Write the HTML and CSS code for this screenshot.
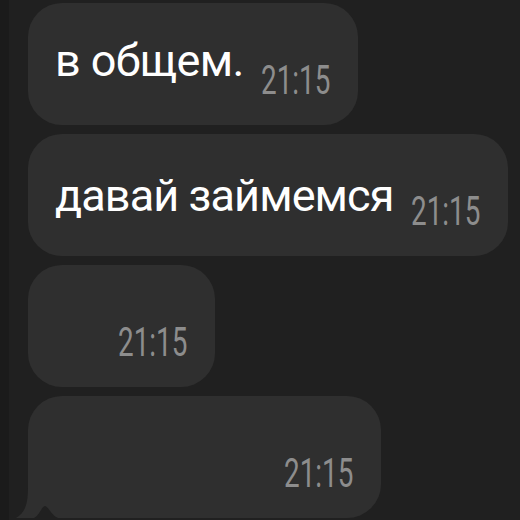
FILE: index.html
```html
<!DOCTYPE html>
<html lang="ru">
<head>
  <meta charset="UTF-8">
  <meta name="viewport" content="width=device-width, initial-scale=1.0">
  <title>Чат</title>
  <link rel="stylesheet" href="styles.css">
</head>
<body>
  <div class="chat">
    <div class="bubble">
      <span class="text">в общем.</span>
      <span class="time">21:15</span>
    </div>
    <div class="bubble bubble-low">
      <span class="text">давай займемся</span>
      <span class="time">21:15</span>
    </div>
    <div class="bubble bubble-empty">
      <span class="time">21:15</span>
    </div>
    <div class="bubble bubble-empty bubble-last">
      <span class="time">21:15</span>
      <svg class="tail" width="50" height="30" viewBox="0 0 50 30">
        <path d="M13 0 C13 16 10 25 1 30 L13 30 Z" fill="#2f2f2f"/>
        <path d="M19 30 C25 27 26 19 30 18 C34 19 36 27 43 30 Z" fill="#202020"/>
      </svg>
    </div>
  </div>
</body>
</html>
```

FILE: styles.css
```css
/* chat screenshot */
body {
  margin: 0;
  background: #202020;
  font-family: Roboto, "Liberation Sans", sans-serif;
  border-left: 9px solid #1b1b1b;
  min-height: 520px;
  box-sizing: border-box;
}

.chat {
  display: flex;
  flex-direction: column;
  align-items: flex-start;
  gap: 9px;
  padding: 3px 0 0 19px;
}

.bubble {
  position: relative;
  display: flex;
  align-items: flex-end;
  gap: 17px;
  height: 122px;
  box-sizing: border-box;
  padding: 0 30px 24px 27px;
  background: #2f2f2f;
  border-radius: 34px;
}

.text {
  color: #fff;
  font-size: 45px;
  line-height: 1;
  letter-spacing: -0.6px;
  white-space: nowrap;
  margin-bottom: 18px;
}

.bubble-low .text {
  letter-spacing: -0.9px;
  margin-bottom: 14px;
}

.time {
  display: inline-block;
  width: 67px;
  color: #8d8d8d;
  font-size: 41px;
  line-height: 1;
  white-space: nowrap;
  transform: scaleX(0.68);
  transform-origin: left bottom;
}

.bubble-empty {
  padding-left: 90px;
}

.bubble-last {
  padding-left: 256px;
  border-bottom-left-radius: 0;
}

.tail {
  position: absolute;
  left: -13px;
  bottom: 0;
}
```
